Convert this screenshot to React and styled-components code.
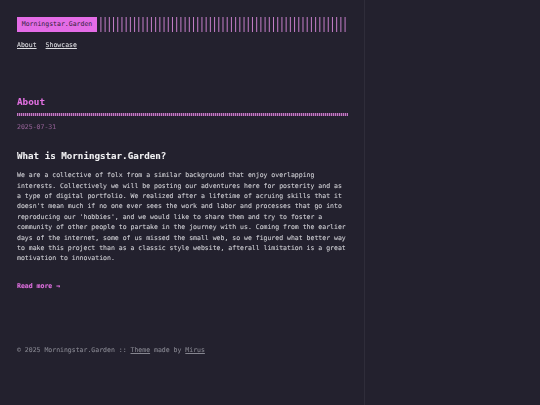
import React from "react";
import styled, { createGlobalStyle } from "styled-components";

const STRIPE_COUNT = 59;
const STRIPE_STEP = 4.21;

const GlobalStyle = createGlobalStyle`
  html, body {
    margin: 0;
    height: 100%;
    background: #23212e;
  }
  body {
    font-family: "DejaVu Sans Mono", "Liberation Mono", monospace;
    font-size: 6.5px;
    line-height: 10.38px;
    color: #cfcfd4;
    -webkit-text-stroke: 0.08px currentColor;
  }
`;

// thin bars that fall between pixels, so half of them smear over two columns
function Stripes() {
  return (
    <StripeSvg width="247" height="15" viewBox="0 0 247 15" aria-hidden="true">
      {Array.from({ length: STRIPE_COUNT }, (_, i) => (
        <rect key={i} x={0.4 + i * STRIPE_STEP} y="0" width="1" height="15" fill="#c57ec9" />
      ))}
    </StripeSvg>
  );
}

export default function App() {
  return (
    <Page>
      <GlobalStyle />
      <Main>
        <Header>
          <Logo>Morningstar.Garden</Logo>
          <Stripes />
        </Header>
        <Nav>
          <NavLink href="#">About</NavLink>
          <NavLink href="#">Showcase</NavLink>
        </Nav>
        <Article>
          <Title>About</Title>
          <DottedRule />
          <PostDate>2025-07-31</PostDate>
          <Heading>What is Morningstar.Garden?</Heading>
          <Body>
            We are a collective of folx from a similar background that enjoy overlapping
            interests. Collectively we will be posting our adventures here for posterity and as
            a type of digital portfolio. We realized after a lifetime of acruing skills that it
            doesn't mean much if no one ever sees the work and labor and processes that go into
            reproducing our 'hobbies', and we would like to share them and try to foster a
            community of other people to partake in the journey with us. Coming from the earlier
            days of the internet, some of us missed the small web, so we figured what better way
            to make this project than as a classic style website, afterall limitation is a great
            motivation to innovation.
          </Body>
          <ReadMore href="#">Read more →</ReadMore>
        </Article>
        <Footer>
          © 2025 Morningstar.Garden :: <FooterLink href="#">Theme</FooterLink> made by{" "}
          <FooterLink href="#">Mirus</FooterLink>
        </Footer>
      </Main>
    </Page>
  );
}

const Page = styled.div`
  display: flex;
  min-height: 405px;
`;

const Main = styled.main`
  width: 331px;
  padding: 17px 16px 0 17px;
  border-right: 1px solid #2f2d3a;
  filter: blur(0.35px);
`;

const Header = styled.header`
  display: flex;
  gap: 3px;
  height: 15px;
`;

const Logo = styled.div`
  flex: none;
  width: 80px;
  background: #e46ce6;
  color: #2f2238;
  line-height: 15px;
  text-align: center;
  -webkit-text-stroke: 0;
`;

const StripeSvg = styled.svg`
  display: block;
  flex: none;
`;

const Nav = styled.nav`
  display: flex;
  gap: 9px;
  margin-top: 8px;
`;

const NavLink = styled.a`
  color: #dcdce0;
  text-decoration: underline;
`;

const Article = styled.article`
  margin-top: 46px;
`;

const Title = styled.h1`
  margin: 0;
  font-size: 9.3px;
  line-height: 12px;
  color: #e070e0;
`;

const DottedRule = styled.div`
  height: 3px;
  margin-top: 5px;
  background-color: #5d3a63;
  background-image: repeating-linear-gradient(
    90deg,
    #c478c4 0,
    #c478c4 1px,
    transparent 1px,
    transparent 2px
  );
`;

const PostDate = styled.div`
  margin-top: 6px;
  color: #8f5f92;
`;

const Heading = styled.h2`
  margin: 17px 0 0;
  font-size: 9.2px;
  line-height: 12px;
  color: #f0f0f2;
`;

const Body = styled.p`
  margin: 8.5px 0 0;
  width: 331px;
`;

const ReadMore = styled.a`
  display: block;
  margin-top: 17px;
  color: #e070e0;
  font-weight: 700;
  text-decoration: none;
`;

const Footer = styled.footer`
  margin-top: 54px;
  color: #85858f;
`;

const FooterLink = styled.a`
  color: inherit;
  text-decoration: underline;
`;
